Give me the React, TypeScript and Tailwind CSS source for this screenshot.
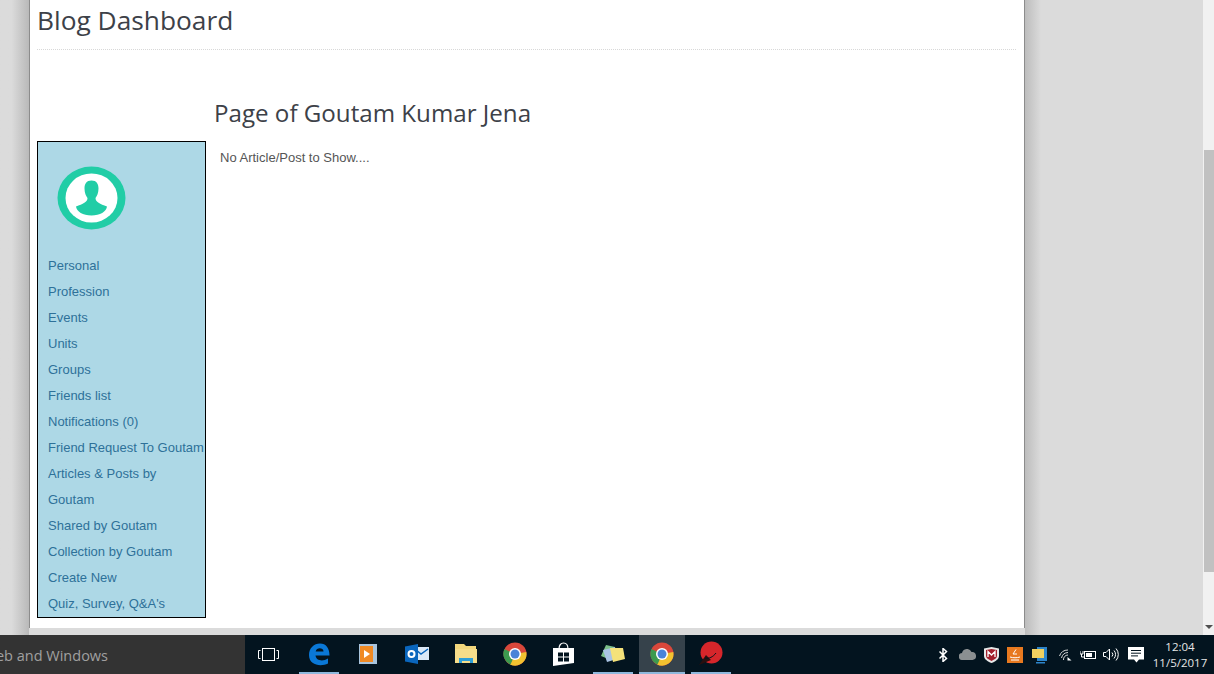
const links = [
  "Personal",
  "Profession",
  "Events",
  "Units",
  "Groups",
  "Friends list",
  "Notifications (0)",
  "Friend Request To Goutam",
  "Articles & Posts by",
  "Goutam",
  "Shared by Goutam",
  "Collection by Goutam",
  "Create New",
  "Quiz, Survey, Q&A's",
];

function Chrome() {
  return (
    <svg width="24" height="24" viewBox="0 0 24 24">
      <circle cx="12" cy="12" r="11.500" fill="#d9473b" />
      <path d="M12 12 L23.300 10 A11.500 11.500 0 0 1 7 22.400 Z" fill="#f2c230" />
      <path d="M12 12 L7.500 22.500 A11.500 11.500 0 0 1 1.400 7 Z" fill="#3d9a4f" />
      <circle cx="12" cy="12" r="6" fill="#fff" />
      <circle cx="12" cy="12" r="4.500" fill="#4a83d8" />
    </svg>
  );
}

function Slot({ children, active, bar }: { children: React.ReactNode; active?: boolean; bar?: boolean }) {
  return (
    <div className="flex h-full w-[49px] shrink-0 justify-center">
      <div
        className={`flex h-full items-center justify-center border-b-2 ${
          active ? "w-[46px] bg-[#36424b]" : "w-[40px]"
        } ${bar ? "border-[#8fb8dc]" : "border-transparent"}`}
      >
        {children}
      </div>
    </div>
  );
}

function Taskbar() {
  return (
    <div className="flex h-[39px] shrink-0 bg-[#03141f]">
      <div
        className="flex h-full w-[245px] shrink-0 items-center justify-end overflow-hidden whitespace-nowrap bg-[#333333] pr-[137px] pt-[2px] text-[14.500px] text-[#a0a0a0]"
        style={{ fontFamily: '"Open Sans", sans-serif' }}
      >
        Search the web and Windows
      </div>

      <div className="flex h-full items-center">
        <div className="flex w-[49px] shrink-0 items-center justify-center pr-[3px]">
          <svg width="21" height="14" viewBox="0 0 21 14" fill="none" stroke="#fff" strokeWidth="1">
            <rect x="4.500" y="0.500" width="12" height="12" />
            <path d="M2.500 2.500H.500v8h2M18.500 2.500h2v8h-2" />
          </svg>
        </div>
        <Slot bar>
          <svg width="22" height="24" viewBox="0 0 22 24">
            <path
              d="M1 13C1 6 6 1.500 12 1.500C18 1.500 21.500 6 21.500 13.500H7.500C8 18.500 14.500 20 20 16.500V21.500C13 25 1 23.500 1 13ZM7.700 9.500H15.500C15.500 5.500 8.500 5 7.700 9.500Z"
              fill="#0a78d7"
            />
          </svg>
        </Slot>
        <Slot>
          <svg width="20" height="22" viewBox="0 0 20 22">
            <rect x="1" y="1" width="18" height="20" fill="#a9c4dc" />
            <rect x="2" y="3" width="13" height="16" fill="#f08a24" />
            <path d="M6 7l6 4-6 4z" fill="#fff" />
          </svg>
        </Slot>
        <Slot>
          <svg width="24" height="20" viewBox="0 0 24 20">
            <rect x="9" y="3" width="15" height="13" fill="#dbe9f7" />
            <path d="M10 5l6 5 7-5" fill="none" stroke="#0a66bd" strokeWidth="1.500" />
            <path d="M0 2.500L13 0v20L0 17.500z" fill="#0a66bd" />
            <circle cx="6.500" cy="10" r="3" fill="none" stroke="#fff" strokeWidth="2" />
          </svg>
        </Slot>
        <Slot>
          <svg width="22" height="19" viewBox="0 0 22 19">
            <path d="M0 0h9l2 2h10v17H0z" fill="#f2d77c" />
            <rect x="0" y="5" width="22" height="14" fill="#f6dd8a" />
            <path d="M4 14h14v5h-3v-2H7v2H4z" fill="#2e9fd8" />
          </svg>
        </Slot>
        <Slot>
          <Chrome />
        </Slot>
        <Slot>
          <svg width="21" height="24" viewBox="0 0 21 24">
            <path d="M6 7C6 3 8 1 10.500 1S15 3 15 7" fill="none" stroke="#fff" strokeWidth="1.200" />
            <path d="M0 6h21v15l-21 3z" fill="#fff" />
            <path d="M5 10.500h5v4H5zM11 10.500h5v4h-5zM5 15.500h5v4H5zM11 15.500h5v4h-5z" fill="#03141f" />
          </svg>
        </Slot>
        <Slot bar>
          <svg width="24" height="20" viewBox="0 0 24 20">
            <path d="M5 1L14 3 10 16 0 12z" fill="#7cc08a" />
            <path d="M2 6l12-3 2 12-10 3z" fill="#a9c4e4" />
            <path d="M9 4l13 0 2 11-12 3z" fill="#f5e27a" />
          </svg>
        </Slot>
        <Slot active bar>
          <Chrome />
        </Slot>
        <Slot bar>
          <svg width="25" height="25" viewBox="0 0 25 25">
            <circle cx="13.500" cy="11.500" r="11" fill="#d6262b" />
            <path d="M1 24L8 14 13 19z" fill="#2a1010" />
            <path d="M7 17C11 18 15 16 18 12" fill="none" stroke="#03141f" strokeWidth="1" />
          </svg>
        </Slot>
      </div>

      <div className="ml-auto flex h-full items-center pr-[3px]">
        <div className="flex w-[24px] justify-center">
          <svg width="9" height="14" viewBox="0 0 9 14" fill="none" stroke="#fff" strokeWidth="1.500">
            <path d="M0.500 3.500l7 7-3.500 3V0.500l3.500 3-7 7" />
          </svg>
        </div>
        <div className="flex w-[24px] justify-center">
          <svg width="17" height="11" viewBox="0 0 17 11">
            <path
              d="M3.500 11A3.500 3.500 0 0 1 3 4 5 5 0 0 1 12.500 3 4 4 0 0 1 13.500 11z"
              fill="#8b8f91"
            />
          </svg>
        </div>
        <div className="flex w-[24px] justify-center">
          <svg width="15" height="16" viewBox="0 0 15 16">
            <path d="M0 1.500L7.500 0 15 1.500V9c0 3-3.500 5.500-7.500 7C3.500 14.500 0 12 0 9z" fill="#e8e8e8" />
            <path d="M2 3l5.500-1L13 3v6c0 2-2.500 3.500-5.500 5C4.500 12.500 2 11 2 9z" fill="#a3202d" />
            <path d="M4 10V4.500l3.500 3.500L11 4.500V10" fill="none" stroke="#fff" strokeWidth="1.300" />
          </svg>
        </div>
        <div className="flex w-[24px] justify-center">
          <div className="flex h-[16px] w-[16px] items-center justify-center bg-[#e8791f]">
            <svg width="12" height="12" viewBox="0 0 12 12" fill="none" stroke="#fff" strokeWidth="1">
              <path d="M7 0.500L4 5h4M1 8c3 1 7 1 10 0M2 11h8" />
            </svg>
          </div>
        </div>
        <div className="flex w-[26px] justify-center">
          <svg width="16" height="18" viewBox="0 0 16 18">
            <rect x="5" y="1" width="10" height="14" fill="#2d84c9" />
            <rect x="0" y="3" width="12" height="9" fill="#f0d060" />
            <rect x="4" y="16" width="9" height="1.500" fill="#2d84c9" />
          </svg>
        </div>
        <div className="flex w-[24px] justify-center">
          <svg width="13" height="12" viewBox="0 0 13 12" fill="none" stroke="#d5d5d5" strokeWidth="1">
            <path d="M.500 7A9 9 0 0 1 9 1M2.500 9A7 7 0 0 1 9 3.500M4.500 11A4.500 4.500 0 0 1 9 6" />
            <path d="M8.500 11.500V8l4 3.500z" fill="#fff" stroke="none" />
          </svg>
        </div>
        <div className="flex w-[22px] justify-center">
          <svg width="16" height="11" viewBox="0 0 16 11" fill="none" stroke="#fff" strokeWidth="1">
            <rect x="4.500" y="2.500" width="11" height="7" />
            <rect x="6" y="4" width="6" height="4" fill="#fff" stroke="none" />
            <path d="M0 2v3h3V2M1.500 5v3h3" />
          </svg>
        </div>
        <div className="flex w-[24px] justify-center">
          <svg width="16" height="13" viewBox="0 0 16 13" fill="none" stroke="#fff" strokeWidth="1">
            <path d="M.500 4.500h2.500L6.500 1v11L3 8.500H.500z" />
            <path d="M9 4.500a3 3 0 0 1 0 4M11 2.500a6 6 0 0 1 0 8M13 .500a9 9 0 0 1 0 12" />
          </svg>
        </div>
        <div className="flex w-[26px] justify-center">
          <svg width="16" height="16" viewBox="0 0 16 16">
            <path d="M0 0h16v12.500h-5L8.500 15.500 6 12.500H0z" fill="#fff" />
            <path d="M3 3.500h10M3 6.200h10M3 8.900h7" stroke="#03141f" strokeWidth="1" />
          </svg>
        </div>
        <div
          className="flex w-[62px] flex-col items-center text-[11.500px] leading-[16px] text-[#e6e6e6]"
          style={{ fontFamily: '"Open Sans", sans-serif' }}
        >
          <span>12:04</span>
          <span>11/5/2017</span>
        </div>
      </div>
    </div>
  );
}

export default function App() {
  return (
    <div className="flex h-[674px] w-[1214px] flex-col overflow-hidden bg-[#dbdbdb]">
      <div className="flex min-h-0 flex-1">
        <div className="w-[29px] shrink-0 bg-gradient-to-r from-[#dbdbdb] via-[#dbdbdb] via-40% to-[#b9b9b9]" />

        <div className="flex h-[628px] w-[996px] shrink-0 flex-col border-x border-[#8c8c8c] bg-white pl-[7px] pr-[8px]">
          <h1
            className="h-[50px] border-b border-dotted border-[#d8d8d8] text-[26.300px] leading-[40px] text-[#3d4148]"
            style={{ fontFamily: '"Open Sans", sans-serif' }}
          >
            Blog Dashboard
          </h1>

          <div className="flex flex-1 gap-[8px]">
            <div className="mt-[91px] flex h-[477px] w-[169px] shrink-0 flex-col border border-black bg-[#add8e6] pl-[10px]">
              <svg className="ml-[9px] mt-[24px] shrink-0" width="69" height="64" viewBox="0 0 69 64">
                <ellipse cx="34.500" cy="32" rx="34" ry="31.500" fill="#21cda6" />
                <ellipse cx="34.500" cy="32" rx="26" ry="24.500" fill="#fff" />
                <path
                  d="M34.500 14.500C29.500 14.500 27.500 18 27.500 22.500C27.500 27 29 30 30.500 32C30.500 36 26 38 19 40.500C19.500 45.500 26 49.500 34.500 49.500C43 49.500 49.500 45.500 50 40.500C43 38 38.500 36 38.500 32C40 30 41.500 27 41.500 22.500C41.500 18 39.500 14.500 34.500 14.500Z"
                  fill="#21cda6"
                />
              </svg>
              <div className="mt-[23px] flex flex-col">
                {links.map((link) => (
                  <a
                    key={link}
                    className="whitespace-nowrap text-[13px] leading-[26px] text-[#2e7199]"
                    style={{ fontFamily: '"Liberation Sans", sans-serif' }}
                  >
                    {link}
                  </a>
                ))}
              </div>
            </div>

            <div>
              <h2
                className="mt-[44px] text-[24.150px] leading-[38px] text-[#3d4148]"
                style={{ fontFamily: '"Open Sans", sans-serif' }}
              >
                Page of Goutam Kumar Jena
              </h2>
              <p
                className="ml-[6px] mt-[16px] text-[13px] leading-[20px] text-[#555555]"
                style={{ fontFamily: '"Liberation Sans", sans-serif' }}
              >
                No Article/Post to Show....
              </p>
            </div>
          </div>
        </div>

        <div className="w-[16px] shrink-0 bg-gradient-to-r from-[#bdbdbd] to-[#dbdbdb]" />
        <div className="flex-1" />

        <div className="flex w-[11px] shrink-0 flex-col bg-[#f1f1f1] pl-[1px] pt-[150px]">
          <div className="h-[422px] bg-[#c1c1c1]" />
          <div className="flex flex-1 items-end justify-center pb-[6px]">
            <div className="h-0 w-0 border-x-[4px] border-t-[4px] border-x-transparent border-t-[#505050]" />
          </div>
        </div>
      </div>

      <Taskbar />
    </div>
  );
}
